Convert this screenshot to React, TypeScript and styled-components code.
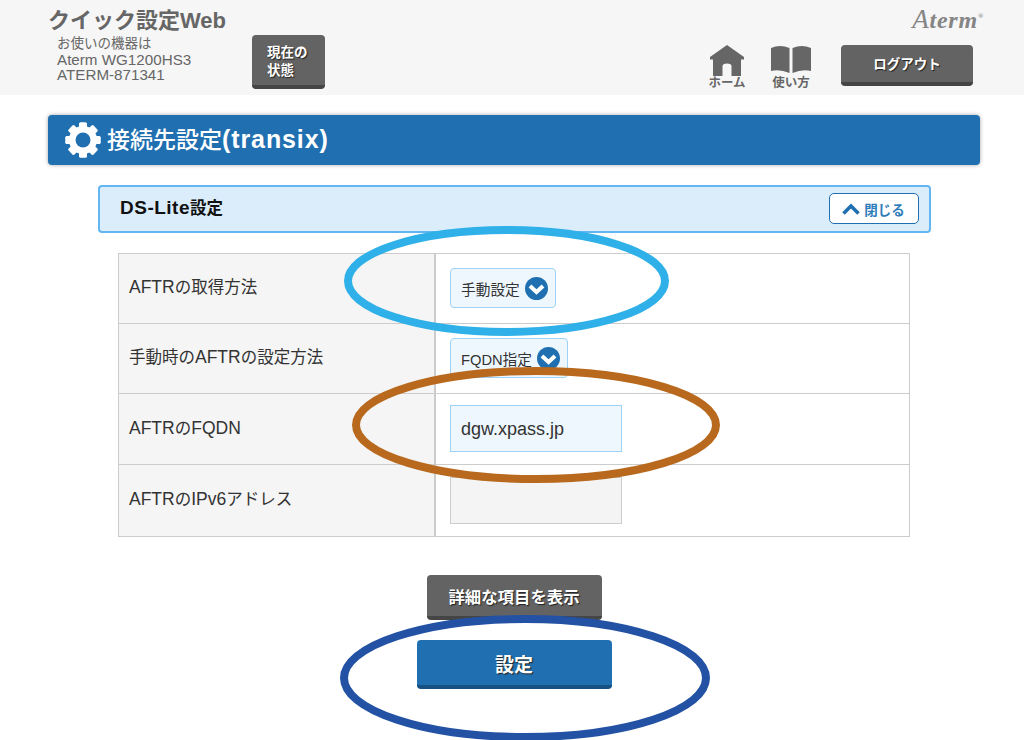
import React from "react";
import styled, { createGlobalStyle } from "styled-components";

const Global = createGlobalStyle`
  html, body { margin: 0; padding: 0; background: #fff; }
  body { font-family: "Liberation Sans", "Noto Sans CJK JP", sans-serif; }
`;

const Page = styled.div`
  position: relative;
  width: 1024px;
  height: 740px;
  overflow: hidden;
`;

const Header = styled.header`
  height: 95px;
  background: #f6f6f6;
  display: flex;
  justify-content: space-between;
  padding: 0 40px 0 48px;
  box-sizing: border-box;
`;

const HeaderLeft = styled.div`
  display: flex;
  align-items: flex-end;
  padding-bottom: 6px;
`;

const Brand = styled.div`
  width: 204px;
  align-self: flex-start;
  padding-top: 8px;
`;

const Title = styled.h1`
  margin: 0;
  font-size: 22px;
  line-height: 26px;
  font-weight: 700;
  color: #666;
  white-space: nowrap;
`;

const Device = styled.div`
  margin: 1px 0 0 9px;
  font-size: 15.2px;
  line-height: 15.5px;
  color: #666;
  white-space: nowrap;
`;

const DeviceLead = styled.span`
  font-size: 13.5px;
`;

const DarkButton = styled.button<{ $w: number; $h: number; $size?: number }>`
  width: ${(p) => p.$w}px;
  height: ${(p) => p.$h}px;
  border: 0;
  border-bottom: 4px solid #454545;
  border-radius: 4px;
  background: #636363;
  color: #fff;
  font-family: inherit;
  font-weight: 700;
  font-size: ${(p) => p.$size ?? 14}px;
  line-height: 18px;
  text-shadow: 1px 1px 1px #222;
  padding: 2px 0 0;
  box-sizing: border-box;
`;

const StatusButton = styled(DarkButton)`
  font-size: 13.5px;
  line-height: 18px;
  text-align: left;
  padding: 4px 0 0 15px;
`;

const HeaderRight = styled.div`
  display: flex;
  flex-direction: column;
  align-items: flex-end;
`;

const Logo = styled.div`
  height: 45px;
  box-sizing: border-box;
  padding-top: 1px;
  font-family: "Liberation Serif", serif;
  font-style: italic;
  font-weight: 700;
  font-size: 24px;
  line-height: 30px;
  color: #858585;
  letter-spacing: 0.8px;
  white-space: nowrap;
`;

const LogoInitial = styled.span`
  font-size: 27px;
  font-weight: 400;
`;

const LogoMark = styled.span`
  font-size: 7px;
  vertical-align: 10px;
`;

const Nav = styled.nav`
  display: flex;
  align-items: flex-start;
  margin-right: 11px;
`;

const NavItem = styled.div<{ $w: number }>`
  width: ${(p) => p.$w}px;
  display: flex;
  flex-direction: column;
  align-items: center;
  font-size: 12.5px;
  font-weight: 700;
  line-height: 14px;
  color: #666;
  svg { display: block; }
`;

const NavIcon = styled.div`
  height: 31px;
  display: flex;
  align-items: flex-start;
`;

const NavGap = styled.div<{ $w: number }>`
  width: ${(p) => p.$w}px;
`;

const Main = styled.main`
  padding: 20px 44px 0 48px;
`;

const PageTitle = styled.div`
  height: 50px;
  background: #2070b1;
  border-radius: 4px;
  box-shadow: 0 0 4px rgba(0, 0, 0, 0.35);
  display: flex;
  align-items: center;
  gap: 6px;
  padding-left: 17px;
  color: #fff;
  font-size: 23px;
  font-weight: 500;
`;

const PageTitleText = styled.span`
  margin-top: -4px;
`;

const PageTitleLatin = styled.span`
  font-size: 25px;
  font-weight: 700;
  letter-spacing: 0.9px;
`;

const Section = styled.section`
  margin: 20px 49px 0 50px;
`;

const SectionBar = styled.div`
  height: 48px;
  box-sizing: border-box;
  background: #dbedfb;
  border: 2.5px solid #62b6f2;
  border-radius: 4px;
  display: flex;
  justify-content: space-between;
  align-items: center;
  padding: 0 10.5px 1px 20px;
  font-size: 16.5px;
  font-weight: 700;
  color: #111;
`;

const SectionName = styled.span`
  margin-top: -3px;
`;

const SectionLatin = styled.span`
  font-size: 19px;
  letter-spacing: 0.5px;
`;

const CloseButton = styled.button`
  width: 90px;
  height: 31px;
  background: #fff;
  border: 1px solid #2070b1;
  border-radius: 5px;
  color: #2f7cba;
  font-family: inherit;
  font-size: 13.5px;
  font-weight: 700;
  display: flex;
  align-items: center;
  justify-content: center;
  gap: 4px;
  padding: 0;
`;

const Table = styled.div`
  margin: 20px 21px 0 20px;
  border: 1px solid #ccc;
`;

const Row = styled.div<{ $h: number }>`
  display: grid;
  grid-template-columns: 317px 1fr;
  height: ${(p) => p.$h}px;
  box-sizing: border-box;
  & + & { border-top: 1px solid #ccc; }
`;

const Label = styled.div`
  background: #f5f5f5;
  border-right: 2px solid #ccc;
  display: flex;
  align-items: center;
  padding: 0 0 5px 10px;
  font-size: 16.5px;
  color: #333;
`;

const LabelLatin = styled.span`
  font-size: 17.5px;
`;

const Value = styled.div`
  padding: 0 0 1px 14px;
  display: flex;
  align-items: center;
`;

const Select = styled.div`
  height: 40px;
  box-sizing: border-box;
  padding: 0 7px 0 10px;
  background: #eef7fe;
  border: 1px solid #9dd2f6;
  border-radius: 4px;
  display: flex;
  align-items: center;
  gap: 5px;
  font-size: 14.7px;
  color: #333;
`;

const TextBox = styled.div<{ $off?: boolean }>`
  width: 172px;
  height: 47px;
  box-sizing: border-box;
  padding: 1px 0 0 10px;
  display: flex;
  align-items: center;
  font-size: 18px;
  color: #333;
  background: ${(p) => (p.$off ? "#f4f4f4" : "#eef7fe")};
  border: 1px solid ${(p) => (p.$off ? "#ccc" : "#9dd2f6")};
`;

const Actions = styled.div`
  margin-top: 38px;
  display: flex;
  flex-direction: column;
  align-items: center;
  gap: 20px;
`;

const PrimaryButton = styled(DarkButton)`
  background: #2070b1;
  border-bottom-color: #175083;
  padding-top: 6px;
`;

const Ring = styled.svg<{ $x: number; $y: number; $w: number; $h: number }>`
  position: absolute;
  left: ${(p) => p.$x}px;
  top: ${(p) => p.$y}px;
  width: ${(p) => p.$w}px;
  height: ${(p) => p.$h}px;
  overflow: visible;
`;

const Annotation = ({ x, y, w, h, color }: { x: number; y: number; w: number; h: number; color: string }) => (
  <Ring $x={x} $y={y} $w={w} $h={h} viewBox={`0 0 ${w} ${h}`}>
    <ellipse cx={w / 2} cy={h / 2} rx={w / 2 - 4} ry={h / 2 - 4} fill="none" stroke={color} strokeWidth={8} />
  </Ring>
);

const Chevron = () => (
  <svg width="23" height="23" viewBox="0 0 23 23">
    <circle cx="11.5" cy="11.5" r="11.5" fill="#2070b1" />
    <path d="M5 9 L11.5 15 L18 9" fill="none" stroke="#fff" strokeWidth="4" />
  </svg>
);

const Gear = () => (
  <svg width="36" height="36" viewBox="0 0 36 36">
    <g fill="#fff">
      {[0, 45, 90, 135, 180, 225, 270, 315].map((a) => (
        <rect key={a} x="14" y="0.5" width="8" height="35" rx="1.5" transform={`rotate(${a} 18 18)`} />
      ))}
      <circle cx="18" cy="18" r="14" />
    </g>
    <circle cx="18" cy="18" r="7.5" fill="#2070b1" />
  </svg>
);

const Home = () => (
  <svg width="34" height="31" viewBox="0 0 34 31">
    <path fill="#666" d="M17 0 L34 12 V14.5 H31 V31 H21.5 V21 Q21.5 18.5 17 18.5 Q12.5 18.5 12.5 21 V31 H3 V14.5 H0 V12 Z" />
  </svg>
);

const Book = () => (
  <svg width="40" height="28" viewBox="0 0 40 28">
    <path fill="#666" d="M0 3 Q9 -1 18.5 3 V28 Q9 24 0 26 Z" />
    <path fill="#666" d="M21.5 3 Q31 -1 40 3 V26 Q31 24 21.5 28 Z" />
  </svg>
);

export default function App() {
  return (
    <Page>
      <Global />
      <Header>
        <HeaderLeft>
          <Brand>
            <Title>クイック設定Web</Title>
            <Device>
              <DeviceLead>お使いの機器は</DeviceLead>
              <br />
              Aterm WG1200HS3
              <br />
              ATERM-871341
            </Device>
          </Brand>
          <StatusButton $w={73} $h={54}>
            現在の
            <br />
            状態
          </StatusButton>
        </HeaderLeft>
        <HeaderRight>
          <Logo>
            <LogoInitial>A</LogoInitial>term<LogoMark>®</LogoMark>
          </Logo>
          <Nav>
            <NavItem $w={40}>
              <NavIcon>
                <Home />
              </NavIcon>
              ホーム
            </NavItem>
            <NavGap $w={24} />
            <NavItem $w={40}>
              <NavIcon>
                <Book />
              </NavIcon>
              使い方
            </NavItem>
            <NavGap $w={30} />
            <DarkButton $w={132} $h={41} $size={13.5}>
              ログアウト
            </DarkButton>
          </Nav>
        </HeaderRight>
      </Header>
      <Main>
        <PageTitle>
          <Gear />
          <PageTitleText>
            接続先設定<PageTitleLatin>(transix)</PageTitleLatin>
          </PageTitleText>
        </PageTitle>
        <Section>
          <SectionBar>
            <SectionName>
              <SectionLatin>DS-Lite</SectionLatin>設定
            </SectionName>
            <CloseButton>
              <svg width="18" height="12" viewBox="0 0 18 12">
                <path d="M1.5 10.5 L9 3 L16.5 10.5" fill="none" stroke="#2070b1" strokeWidth="3.6" />
              </svg>
              閉じる
            </CloseButton>
          </SectionBar>
          <Table>
            <Row $h={69}>
              <Label>
                <span>
                  <LabelLatin>AFTR</LabelLatin>の取得方法
                </span>
              </Label>
              <Value>
                <Select>
                  手動設定
                  <Chevron />
                </Select>
              </Value>
            </Row>
            <Row $h={70}>
              <Label>
                <span>
                  手動時の<LabelLatin>AFTR</LabelLatin>の設定方法
                </span>
              </Label>
              <Value>
                <Select>
                  FQDN指定
                  <Chevron />
                </Select>
              </Value>
            </Row>
            <Row $h={71}>
              <Label>
                <span>
                  <LabelLatin>AFTR</LabelLatin>の<LabelLatin>FQDN</LabelLatin>
                </span>
              </Label>
              <Value>
                <TextBox>dgw.xpass.jp</TextBox>
              </Value>
            </Row>
            <Row $h={72}>
              <Label>
                <span>
                  <LabelLatin>AFTR</LabelLatin>の<LabelLatin>IPv6</LabelLatin>アドレス
                </span>
              </Label>
              <Value>
                <TextBox $off />
              </Value>
            </Row>
          </Table>
        </Section>
        <Actions>
          <DarkButton $w={175} $h={45} $size={16.4}>
            詳細な項目を表示
          </DarkButton>
          <PrimaryButton $w={195} $h={49} $size={19}>
            設定
          </PrimaryButton>
        </Actions>
      </Main>
      <Annotation x={344} y={226} w={325} h={110} color="#2fb0e8" />
      <Annotation x={352} y={367} w={368} h={116} color="#b8691e" />
      <Annotation x={340} y={615} w={370} h={126} color="#2352a4" />
    </Page>
  );
}
